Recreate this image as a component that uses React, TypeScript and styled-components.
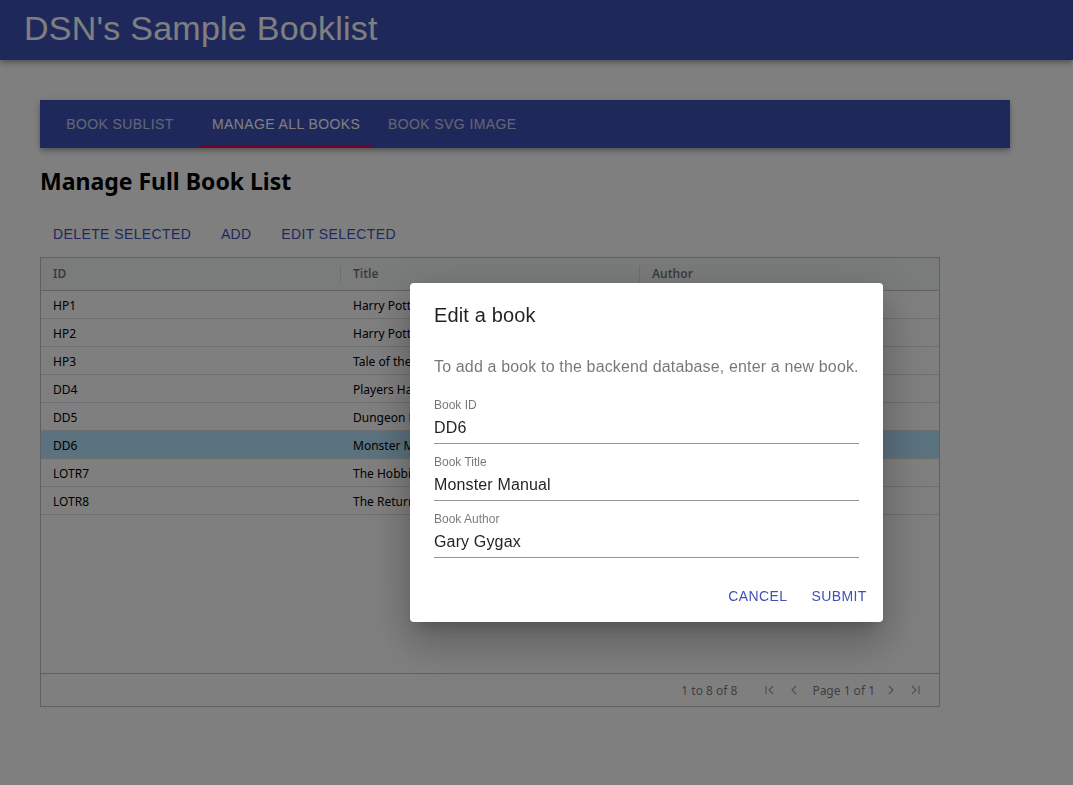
import React from 'react'
import styled, { createGlobalStyle } from 'styled-components'

const GlobalStyle = createGlobalStyle`
  html, body {
    margin: 0;
    padding: 0;
    background: #ffffff;
    font-family: "Liberation Sans", Arial, sans-serif;
  }
`

const books = [
  { id: 'HP1', title: 'Harry Potter and the Sorcerers Stone', author: 'J.K. Rowling' },
  { id: 'HP2', title: 'Harry Potter and the Chamber of Secrets', author: 'J.K. Rowling' },
  { id: 'HP3', title: 'Tale of the Three Brothers', author: 'J.K. Rowling' },
  { id: 'DD4', title: 'Players Handbook', author: 'Gary Gygax' },
  { id: 'DD5', title: 'Dungeon Masters Guide', author: 'Gary Gygax' },
  { id: 'DD6', title: 'Monster Manual', author: 'Gary Gygax' },
  { id: 'LOTR7', title: 'The Hobbit', author: 'J.R.R. Tolkien' },
  { id: 'LOTR8', title: 'The Return of the King', author: 'J.R.R. Tolkien' },
]

const tabs = ['Book Sublist', 'Manage All Books', 'Book SVG Image']

const fields = [
  { label: 'Book ID', value: 'DD6' },
  { label: 'Book Title', value: 'Monster Manual' },
  { label: 'Book Author', value: 'Gary Gygax' },
]

const PageIcon = ({ kind }: { kind: 'first' | 'prev' | 'next' | 'last' }) => (
  <svg width="16" height="16" viewBox="0 0 16 16" fill="none" stroke="currentColor" strokeWidth="1.2">
    {kind === 'first' && (
      <>
        <path d="M4 4v8" />
        <path d="M11 4l-4 4 4 4" />
      </>
    )}
    {kind === 'prev' && <path d="M10 4l-4 4 4 4" />}
    {kind === 'next' && <path d="M6 4l4 4-4 4" />}
    {kind === 'last' && (
      <>
        <path d="M5 4l4 4-4 4" />
        <path d="M12 4v8" />
      </>
    )}
  </svg>
)

const App = () => {
  return (
    <>
      <GlobalStyle />
      <AppBar>
        <AppTitle>DSN's Sample Booklist</AppTitle>
      </AppBar>

      <Main>
        <TabsBar>
          {tabs.map((t, i) => (
            <Tab key={t} $active={i === 1}>{t}</Tab>
          ))}
        </TabsBar>

        <Heading>Manage Full Book List</Heading>

        <ButtonRow>
          <TextButton>Delete Selected</TextButton>
          <TextButton>Add</TextButton>
          <TextButton>Edit Selected</TextButton>
        </ButtonRow>

        <Grid>
          <HeaderRow>
            <HeaderCell $sep>ID</HeaderCell>
            <HeaderCell $sep>Title</HeaderCell>
            <HeaderCell>Author</HeaderCell>
          </HeaderRow>
          <Body>
            {books.map(b => (
              <Row key={b.id} $selected={b.id === 'DD6'}>
                <Cell>{b.id}</Cell>
                <Cell>{b.title}</Cell>
                <Cell>{b.author}</Cell>
              </Row>
            ))}
          </Body>
          <Paging>
            <Summary>1 to 8 of 8</Summary>
            <PageButton><PageIcon kind="first" /></PageButton>
            <PageButton><PageIcon kind="prev" /></PageButton>
            <PageText>Page 1 of 1</PageText>
            <PageButton><PageIcon kind="next" /></PageButton>
            <PageButton><PageIcon kind="last" /></PageButton>
          </Paging>
        </Grid>
      </Main>

      <Backdrop>
        <Dialog>
          <DialogTitle>Edit a book</DialogTitle>
          <DialogContent>
            <DialogText>To add a book to the backend database, enter a new book.</DialogText>
            {fields.map(f => (
              <Field key={f.label}>
                <FieldLabel>{f.label}</FieldLabel>
                <FieldInput readOnly value={f.value} />
              </Field>
            ))}
          </DialogContent>
          <DialogActions>
            <TextButton>Cancel</TextButton>
            <TextButton>Submit</TextButton>
          </DialogActions>
        </Dialog>
      </Backdrop>
    </>
  )
}

const AppBar = styled.header`
  height: 60px;
  display: flex;
  align-items: center;
  padding: 0 24px 4px;
  box-sizing: border-box;
  background: #3f51b5;
  color: #ffffff;
  box-shadow: 0px 2px 4px -1px rgba(0,0,0,0.2), 0px 4px 5px 0px rgba(0,0,0,0.14), 0px 1px 10px 0px rgba(0,0,0,0.12);
`

const AppTitle = styled.h1`
  margin: 0;
  font-size: 34px;
  font-weight: 400;
  letter-spacing: 0.25px;
  line-height: 1.2;
`

const Main = styled.main`
  padding: 40px 40px 78px;
`

const TabsBar = styled.nav`
  width: 970px;
  height: 48px;
  display: flex;
  background: #3f51b5;
  box-shadow: 0px 2px 4px -1px rgba(0,0,0,0.2), 0px 4px 5px 0px rgba(0,0,0,0.14), 0px 1px 10px 0px rgba(0,0,0,0.12);
`

const Tab = styled.div<{ $active?: boolean }>`
  min-width: 160px;
  padding: 8px 12px 6px;
  box-sizing: border-box;
  display: flex;
  align-items: center;
  justify-content: center;
  font-size: 14px;
  letter-spacing: 0.4px;
  text-transform: uppercase;
  color: #ffffff;
  opacity: ${p => (p.$active ? 1 : 0.7)};
  border-bottom: 2px solid ${p => (p.$active ? '#f50057' : 'transparent')};
`

const Heading = styled.h2`
  margin: 18px 0 0;
  font-family: "Noto Sans", sans-serif;
  font-size: 23px;
  font-weight: 700;
  line-height: 30px;
  color: #000000;
`

const ButtonRow = styled.div`
  display: flex;
  gap: 5px;
  margin-top: 20px;
  padding-left: 5px;
`

const TextButton = styled.button`
  min-width: 64px;
  height: 36px;
  padding: 6px 8px;
  border: none;
  background: transparent;
  font-family: "Liberation Sans", Arial, sans-serif;
  font-size: 14px;
  letter-spacing: 0.4px;
  text-transform: uppercase;
  color: #3f51b5;
  border-radius: 4px;
  cursor: pointer;
`

const Grid = styled.div`
  margin-top: 5px;
  width: 900px;
  height: 450px;
  box-sizing: border-box;
  border: 1px solid #bdc3c7;
  display: flex;
  flex-direction: column;
  font-family: "Noto Sans", sans-serif;
  font-size: 12px;
  color: #000000;
`

const HeaderRow = styled.div`
  height: 32px;
  flex: none;
  display: grid;
  grid-template-columns: 300px 299px 1fr;
  background: #f5f7f7;
  border-bottom: 1px solid #bdc3c7;
`

const HeaderCell = styled.div<{ $sep?: boolean }>`
  position: relative;
  display: flex;
  align-items: center;
  padding: 0 12px 1px;
  font-weight: 600;
  color: rgba(0,0,0,0.54);
  &::after {
    content: '';
    display: ${p => (p.$sep ? 'block' : 'none')};
    position: absolute;
    right: 0;
    top: 8px;
    width: 1px;
    height: 16px;
    background: rgba(189,195,199,0.5);
  }
`

const Body = styled.div`
  flex: 1;
  background: #ffffff;
`

const Row = styled.div<{ $selected?: boolean }>`
  height: 28px;
  box-sizing: border-box;
  display: grid;
  grid-template-columns: 300px 299px 1fr;
  border-bottom: 1px solid #d9dcde;
  background: ${p => (p.$selected ? '#b7e4ff' : '#ffffff')};
`

const Cell = styled.div`
  display: flex;
  align-items: center;
  padding: 1px 12px 0;
  white-space: nowrap;
  overflow: hidden;
`

const Paging = styled.div`
  height: 32px;
  flex: none;
  display: flex;
  align-items: center;
  justify-content: flex-end;
  gap: 8px;
  padding-right: 16px;
  border-top: 1px solid #bdc3c7;
  color: rgba(0,0,0,0.54);
`

const Summary = styled.span`
  margin-right: 17px;
`

const PageButton = styled.span`
  display: flex;
  width: 16px;
  height: 16px;
  color: rgba(0,0,0,0.38);
`

const PageText = styled.span`
  margin-left: 2px;
`

const Backdrop = styled.div`
  position: fixed;
  inset: 0;
  background: rgba(0,0,0,0.5);
  display: flex;
  align-items: flex-start;
  padding: 283px 0 0 410px;
`

const Dialog = styled.div`
  background: #ffffff;
  border-radius: 4px;
  box-shadow: 0px 11px 15px -7px rgba(0,0,0,0.2), 0px 24px 38px 3px rgba(0,0,0,0.14), 0px 9px 46px 8px rgba(0,0,0,0.12);
  display: flex;
  flex-direction: column;
`

const DialogTitle = styled.h2`
  margin: 0;
  padding: 16px 24px;
  font-size: 20px;
  font-weight: 400;
  line-height: 32px;
  letter-spacing: 0.15px;
  color: rgba(0,0,0,0.87);
`

const DialogContent = styled.div`
  display: flex;
  flex-direction: column;
  padding: 8px 24px;
`

const DialogText = styled.p`
  margin: 0 0 12px;
  font-size: 16px;
  line-height: 24px;
  letter-spacing: 0.15px;
  color: rgba(0,0,0,0.54);
  white-space: nowrap;
`

const Field = styled.label`
  display: flex;
  flex-direction: column;
  margin: 8px 0 4px;
`

const FieldLabel = styled.span`
  font-size: 12px;
  line-height: 12px;
  height: 16px;
  color: rgba(0,0,0,0.54);
`

const FieldInput = styled.input`
  display: block;
  width: 100%;
  box-sizing: border-box;
  border: none;
  border-bottom: 1px solid rgba(0,0,0,0.42);
  outline: none;
  padding: 3px 0 6px;
  height: 29px;
  font-family: "Liberation Sans", Arial, sans-serif;
  font-size: 16px;
  letter-spacing: 0.15px;
  color: rgba(0,0,0,0.87);
  background: transparent;
`

const DialogActions = styled.div`
  display: flex;
  justify-content: flex-end;
  gap: 8px;
  padding: 8px;
`

export default App
